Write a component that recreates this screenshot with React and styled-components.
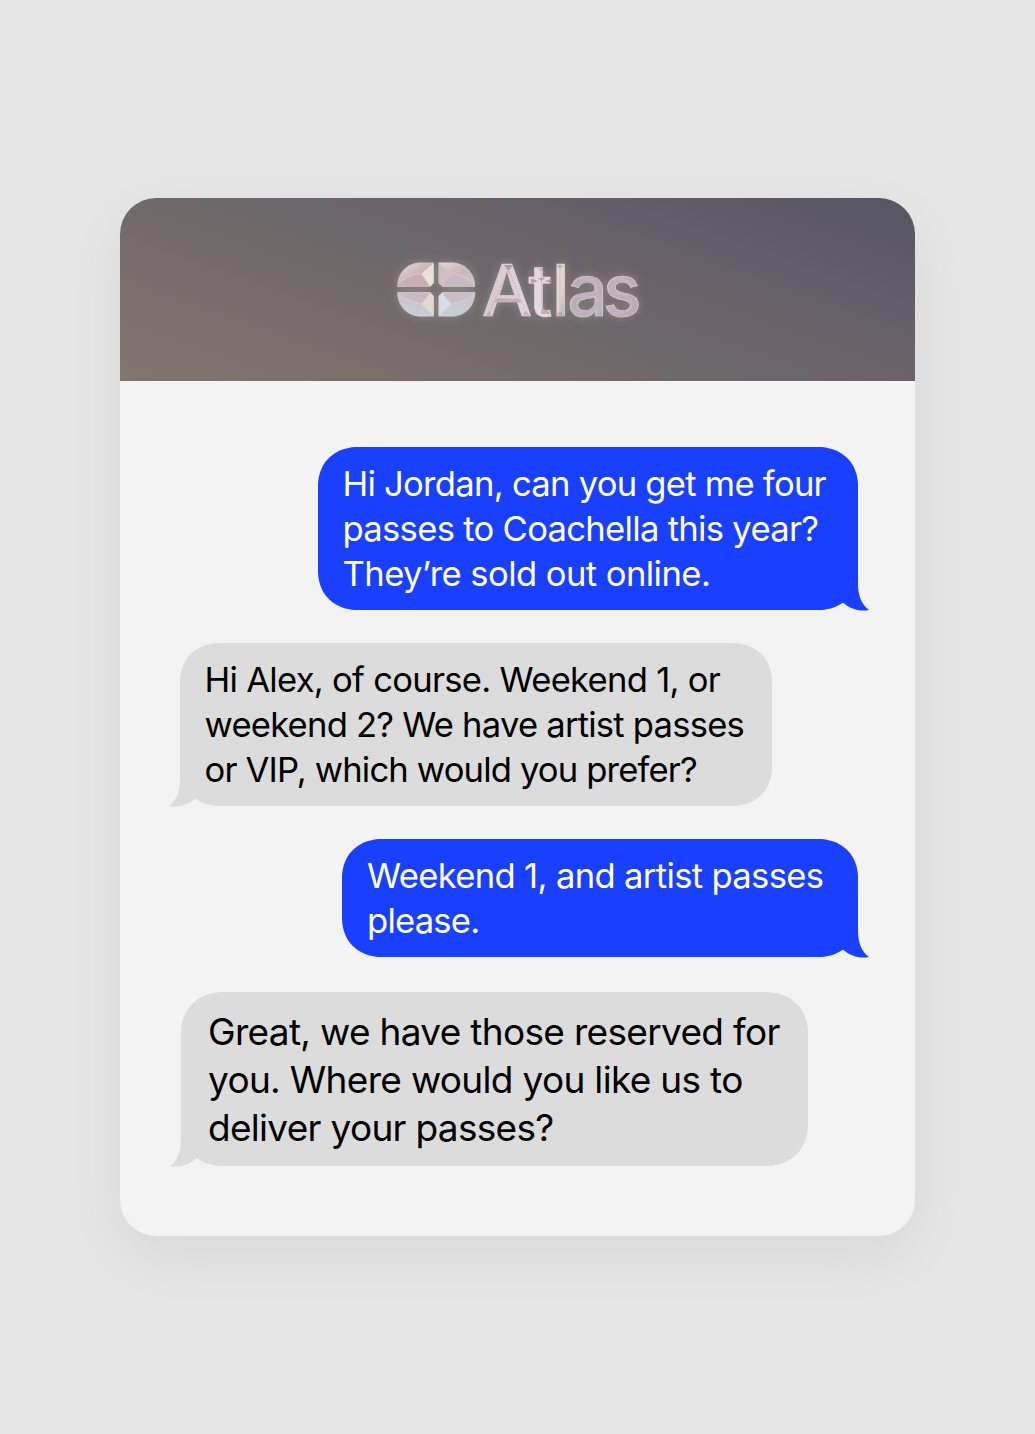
import React from "react";
import styled, { createGlobalStyle } from "styled-components";

const GlobalStyle = createGlobalStyle`
  * { box-sizing: border-box; }
  body { margin: 0; background: #e6e6e6; }
`;

const Page = styled.main`
  min-height: 1434px;
  padding: 198px 120px;
  background: #e6e6e6;
  font-family: Inter, "Liberation Sans", sans-serif;
`;

const Card = styled.section`
  height: 1038px;
  border-radius: 36px;
  overflow: hidden;
  background: #f3f3f3;
  box-shadow: 0 20px 60px -3px rgba(0, 0, 0, 0.07);
`;

const Header = styled.header`
  height: 183px;
  display: flex;
  justify-content: center;
  align-items: center;
  background: linear-gradient(19.6deg, #82766f 0%, #7b6f6d 20%, #766c6c 28%, #706a6a 38%, #6c676a 50%, #696269 64%, #565564 100%);
`;

const Logo = styled.svg`
  display: block;
  width: 280px;
  height: 90px;
  overflow: visible;
  filter: drop-shadow(0 0 5px rgba(225, 220, 215, 0.3));
`;

const Thread = styled.div`
  display: flex;
  flex-direction: column;
  padding: 66px 57px 0 59.5px;
`;

const Bubble = styled.article`
  position: relative;
  align-self: ${(p) => (p.$sent ? "flex-end" : "flex-start")};
  width: ${(p) => p.$width}px;
  height: ${(p) => p.$height}px;
  margin-left: ${(p) => p.$indent || 0}px;
  margin-bottom: ${(p) => p.$gap || 0}px;
  padding: ${(p) => (p.$large ? "16px 0 0 27px" : "14px 0 0 25px")};
  border-radius: ${(p) => (p.$large ? "43px / 41px" : "40px / 39px")};
  corner-shape: superellipse(1.1);
  background: ${(p) => (p.$sent ? "#1940ff" : "#dcdcdc")};
  color: ${(p) => (p.$sent ? "#fff" : "#000")};
  font-size: ${(p) => (p.$large ? 37 : 34.6)}px;
  line-height: ${(p) => (p.$large ? 48 : 45)}px;
`;

const Line = styled.span`
  display: block;
  white-space: nowrap;
  letter-spacing: ${(p) => p.$track}px;
`;

const TailShape = styled.svg`
  position: absolute;
  bottom: -1px;
  width: 37px;
  height: 44px;
  ${(p) => (p.$sent ? "right: -11px;" : "left: -11px; transform: scaleX(-1);")}
`;

const Tail = ({ sent }) => (
  <TailShape $sent={sent} viewBox="0 0 37 44">
    <path
      d="M0 25L10 0H26V17C26 29 30 38 37 43C28 45 18.5 42 11.5 36L0 30Z"
      fill={sent ? "#1940ff" : "#dcdcdc"}
    />
  </TailShape>
);

const messages = [
  {
    sent: true, width: 540.5, height: 163, gap: 33,
    lines: [["Hi Jordan, can you get me four", -0.73], ["passes to Coachella this year?", -0.69], ["They’re sold out online.", -0.56]],
  },
  {
    width: 592.5, height: 163, gap: 33,
    lines: [["Hi Alex, of course. Weekend 1, or", -0.71], ["weekend 2? We have artist passes", -0.77], ["or VIP, which would you prefer?", -0.84]],
  },
  {
    sent: true, width: 516, height: 118, gap: 35,
    lines: [["Weekend 1, and artist passes", -0.65], ["please.", -0.78]],
  },
  {
    large: true, width: 627, height: 174, indent: 1.5,
    lines: [["Great, we have those reserved for", -0.68], ["you. Where would you like us to", -0.68], ["deliver your passes?", -0.7]],
  },
];

const AtlasLogo = () => (
  <Logo viewBox="0 0 280 90" role="img" aria-label="Atlas">
    <defs>
      <linearGradient id="pink" x1="0" y1="0" x2="1" y2="1">
        <stop offset="0" stopColor="#e5dadb" /><stop offset=".5" stopColor="#cdb6ba" /><stop offset="1" stopColor="#d3c5cb" />
      </linearGradient>
      <linearGradient id="blue" x1="0" y1="0" x2="0" y2="1">
        <stop offset="0" stopColor="#cdc1c8" /><stop offset="1" stopColor="#c6cfd7" />
      </linearGradient>
      <linearGradient id="word" gradientUnits="userSpaceOnUse" x1="105" y1="18" x2="261" y2="50">
        <stop offset="0" stopColor="#d6c5cc" /><stop offset=".25" stopColor="#e2d0d7" /><stop offset=".42" stopColor="#e6d8e3" />
        <stop offset=".47" stopColor="#e3d9cd" /><stop offset=".52" stopColor="#ded6cd" /><stop offset=".57" stopColor="#b8adb6" /><stop offset=".8" stopColor="#bdb3bd" /><stop offset="1" stopColor="#b9adb4" />
      </linearGradient>
    </defs>
    <g transform="translate(2.2 0)">
      <path d="M17 42C17 28 27 17.5 41 17.5H53.5V38L50 42Z" fill="url(#pink)" />
      <path d="M18 39C26 32 33 29 41 29L50 42H17Z" fill="#c7afb4" />
      <path d="M53.5 18V38L50 41L41 29Z" fill="#e9e0d8" />
      <path d="M58.5 17.5H71C85 17.5 95 28 95 42H62L58.5 38Z" fill="url(#pink)" />
      <path d="M70 29C80 29 88 33 94 39L95 42H62Z" fill="#c9bac1" />
      <path d="M58.5 18L71 29L62 41L58.5 38Z" fill="#d4bec6" />
      <path d="M17 47H50L53.5 51V71.5H41C27 71.5 17 61 17 47Z" fill="url(#blue)" />
      <path d="M18 48H50L41 59C33 56 25 53 18 48Z" fill="#cabbc3" />
      <path d="M50 48L53.5 51V71L41 59Z" fill="#dfdbd4" />
      <path d="M62 47H95C95 61 85 71.5 71 71.5H58.5V51Z" fill="url(#blue)" />
      <path d="M62 48H94C86 53 79 57 71 59Z" fill="#cabdc6" />
      <path d="M62 48L71 59L58.5 71V51Z" fill="#d6dfe8" />
      <path d="M18 39C26 32 33 29 41 29M94 39C86 32 79 29 71 29M18 50C26 55 33 58 41 59M94 50C86 55 79 58 71 59" fill="none" stroke="#e6dade" strokeWidth=".7" strokeDasharray="1 .5" />
    </g>
    <text x="103.8 150.2 173.8 189.2 225" y="71" fontFamily="Inter, sans-serif" fontSize="71.5" fontWeight="530" fill="url(#word)" stroke="#ddd2d6" strokeWidth=".7">Atlas</text>
    <g fill="#98848a" opacity=".65">
      <path d="M126 20H135L130.5 26Z" />
      <path d="M119 53.5H141L144 57.5H116Z" opacity=".6" />
      <path d="M153 33.5L160 36L153 38.5ZM174 33.5L167 36L174 38.5ZM160 33H167L163.5 36Z" />
      <path d="M160 23.5H167L163.5 26ZM178.5 20H185.5L182 24ZM179 70.5H185.5L182 66ZM164 62L173 69L163 69Z" opacity=".7" />
      <path d="M108 70.5L113 70.5L112 65ZM145 70.5H152L147 65Z" opacity=".6" />
    </g>
    <g fill="none" stroke="#a9939e" strokeWidth=".6" strokeDasharray="2 1" opacity=".75">
      <path d="M130 26L112 65M131 26L147 65M163.5 25V58Q163.5 66 173 67M182 24V66" />
      <path d="M194 40Q199 33 207 33Q219 33 219 43V68M217 52Q193 48 193 60Q194 68 204 68M253 40Q248 33 240 33Q229 34 230 42Q232 48 243 49Q255 52 254 60Q251 68 241 68Q230 68 227 59" stroke="#dfd6dc" />
    </g>
  </Logo>
);

export default function App() {
  return (
    <>
      <GlobalStyle />
      <Page>
        <Card>
          <Header><AtlasLogo /></Header>
          <Thread>
            {messages.map((m, i) => (
              <Bubble key={i} $sent={m.sent} $large={m.large} $width={m.width} $height={m.height} $gap={m.gap} $indent={m.indent}>
                <Tail sent={m.sent} />
                {m.lines.map(([text, track]) => <Line key={text} $track={track}>{text}</Line>)}
              </Bubble>
            ))}
          </Thread>
        </Card>
      </Page>
    </>
  );
}
